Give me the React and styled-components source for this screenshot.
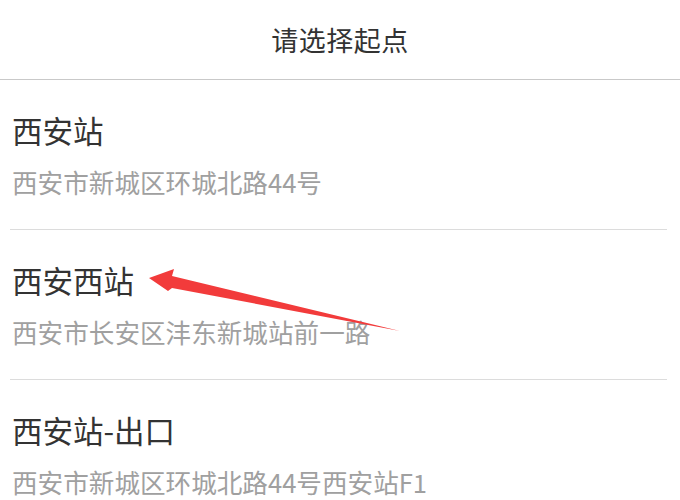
import styled, { createGlobalStyle } from 'styled-components';

const GlobalStyle = createGlobalStyle`
  html, body {
    margin: 0;
    padding: 0;
    background: #ffffff;
  }
  body {
    font-family: "Noto Sans CJK SC", "Noto Sans", sans-serif;
  }
`;

const stations = [
  { name: '西安站', address: '西安市新城区环城北路44号' },
  { name: '西安西站', address: '西安市长安区沣东新城站前一路' },
  { name: '西安站-出口', address: '西安市新城区环城北路44号西安站F1' },
];

export default function App() {
  return (
    <>
      <GlobalStyle />
      <Page>
        <Header>请选择起点</Header>
        <List>
          {stations.map((s) => (
            <Item key={s.name}>
              <Name>{s.name}</Name>
              <Address>{s.address}</Address>
            </Item>
          ))}
        </List>
        <Arrow viewBox="0 0 680 500" width="680" height="500">
          <polygon
            points="149,278 174,269 172,276 400,331 172,288 168,291"
            fill="#f23b3b"
          />
        </Arrow>
      </Page>
    </>
  );
}

const Page = styled.div`
  position: relative;
  width: 680px;
  height: 500px;
  overflow: hidden;
  background: #ffffff;
`;

const Header = styled.div`
  height: 79px;
  display: flex;
  align-items: center;
  justify-content: center;
  border-bottom: 1px solid #c9c9c9;
  font-size: 27px;
  color: #333333;
  letter-spacing: 0.5px;
`;

const List = styled.div`
  display: flex;
  flex-direction: column;
  margin: 0 13px 0 10px;
`;

const Item = styled.div`
  padding: 30px 0 30px 2px;
  border-bottom: 1px solid #dcdcdc;
  display: flex;
  flex-direction: column;
  gap: 15px;
`;

const Name = styled.div`
  font-size: 30.5px;
  line-height: 40px;
  color: #333333;
`;

const Address = styled.div`
  font-size: 25.6px;
  line-height: 34px;
  color: #a0a0a0;
`;

const Arrow = styled.svg`
  position: absolute;
  left: 0;
  top: 0;
  pointer-events: none;
`;
